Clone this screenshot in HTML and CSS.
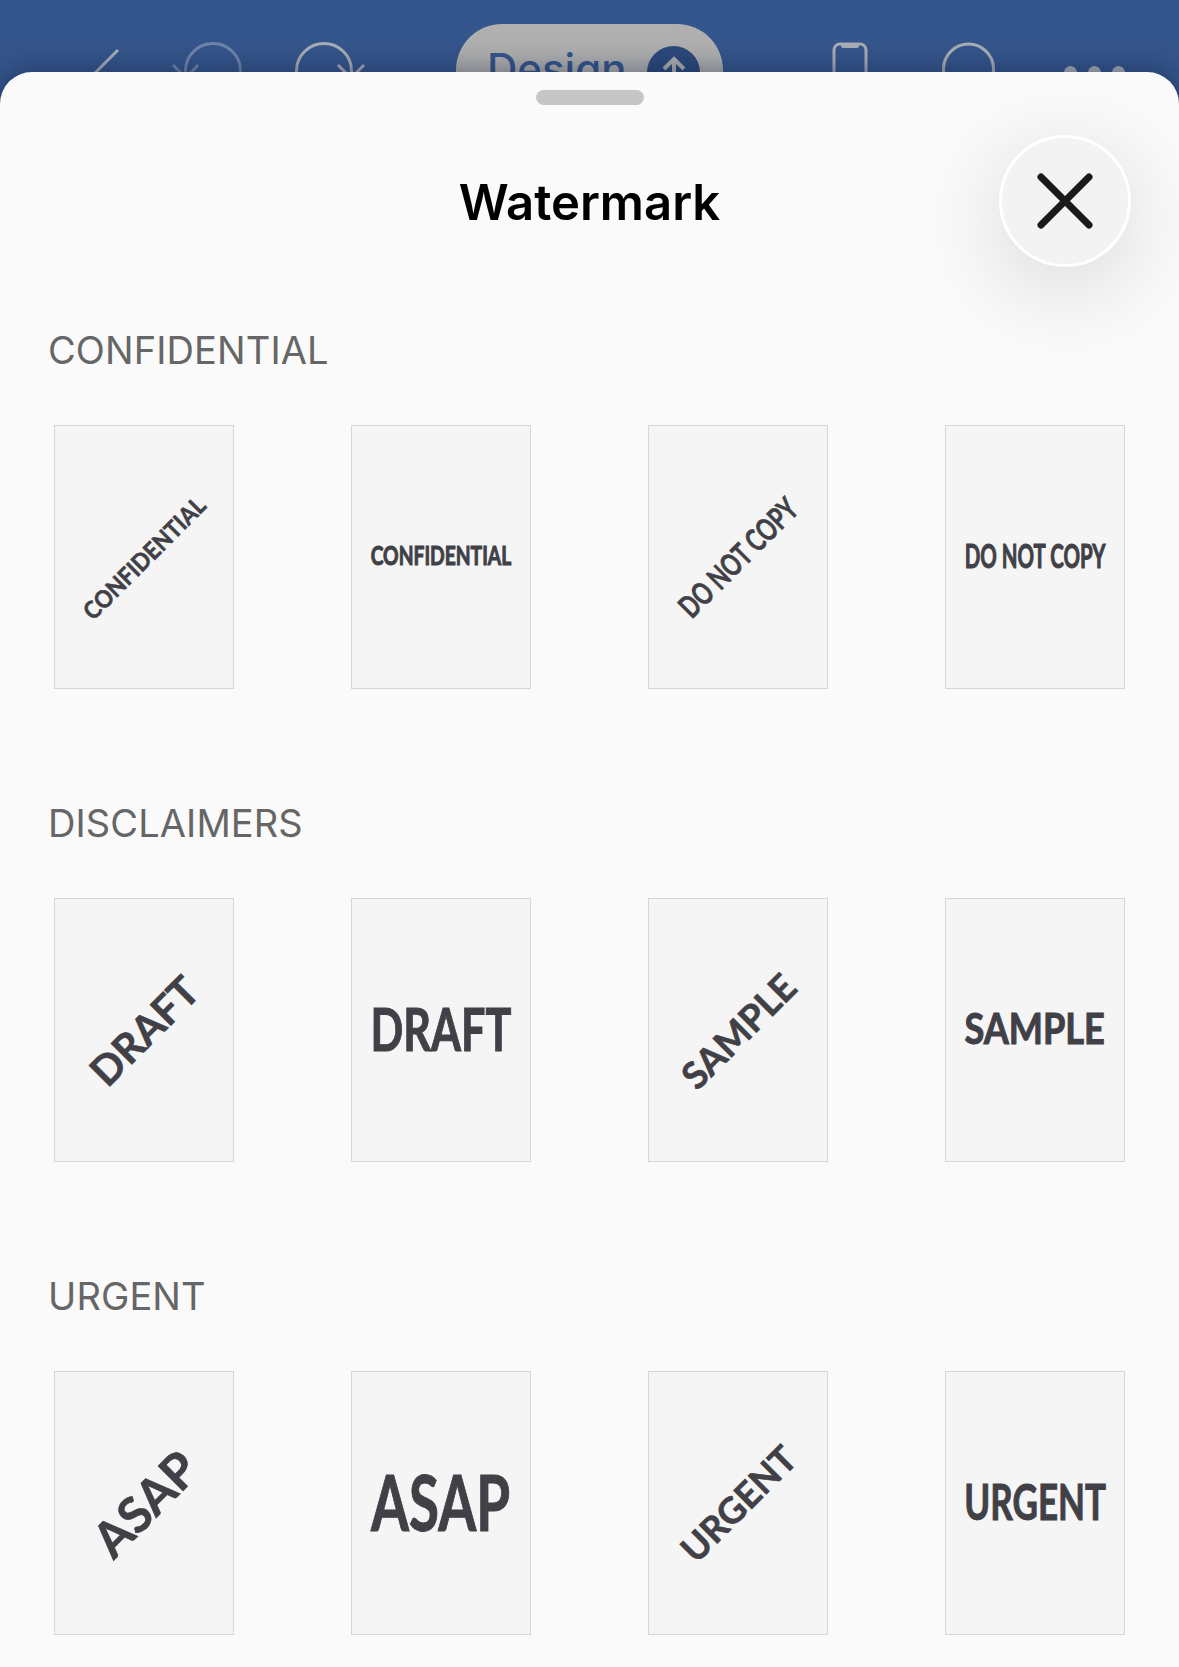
FILE: index.html
```html
<!DOCTYPE html>
<html lang="en">
<head>
    <meta charset="UTF-8">
    <meta name="viewport" content="width=device-width, initial-scale=1.0">
    <title>Watermark</title>
    <link rel="stylesheet" href="styles.css">
</head>
<body>
    <div class="toolbar">
        <svg class="tool tool-back" width="30" height="40" viewBox="0 0 30 40"><path d="M26 8 L-4 38"/></svg>
        <svg class="tool tool-undo" width="70" height="40" viewBox="0 0 70 40"><circle cx="41" cy="29" r="27.5"/><path d="M1 23 L14 36 L26 23"/></svg>
        <svg class="tool tool-redo" width="76" height="40" viewBox="0 0 76 40"><circle cx="34" cy="29" r="27.5"/><path d="M48 23 L61 36 L74 23"/></svg>
        <div class="pill">
            <span class="pill-label">Design</span>
            <span class="pill-arrow">
                <svg width="24" height="30" viewBox="0 0 24 30"><path d="M12 30 V3 M2 13 L12 3 L22 13"/></svg>
            </span>
        </div>
        <svg class="tool tool-phone" width="36" height="40" viewBox="0 0 36 40"><rect x="2" y="2" width="32" height="60" rx="6"/><path class="notch" d="M9 2 H27 V4 Q27 6 25 6 H11 Q9 6 9 4 Z"/></svg>
        <svg class="tool tool-search" width="53" height="40" viewBox="0 0 53 40"><circle cx="26.5" cy="27" r="25"/></svg>
        <div class="dots"><span></span><span></span><span></span></div>
    </div>

    <div class="sheet">
        <div class="handle"></div>
        <div class="sheet-head">
            <h1 class="sheet-title">Watermark</h1>
            <button class="close">
                <svg width="56" height="56" viewBox="0 0 56 56"><path d="M4 4 L52 52 M52 4 L4 52"/></svg>
            </button>
        </div>

        <h2 class="group-title">CONFIDENTIAL</h2>
        <div class="grid">
            <div class="page"><span class="mark conf-tilt">CONFIDENTIAL</span></div>
            <div class="page"><span class="mark flat conf">CONFIDENTIAL</span></div>
            <div class="page"><span class="mark copy-tilt">DO NOT COPY</span></div>
            <div class="page"><span class="mark flat copy">DO NOT COPY</span></div>
        </div>

        <h2 class="group-title">DISCLAIMERS</h2>
        <div class="grid">
            <div class="page"><span class="mark draft-tilt">DRAFT</span></div>
            <div class="page"><span class="mark flat draft">DRAFT</span></div>
            <div class="page"><span class="mark sample-tilt">SAMPLE</span></div>
            <div class="page"><span class="mark flat sample">SAMPLE</span></div>
        </div>

        <h2 class="group-title">URGENT</h2>
        <div class="grid">
            <div class="page"><span class="mark asap-tilt">ASAP</span></div>
            <div class="page"><span class="mark flat asap">ASAP</span></div>
            <div class="page"><span class="mark urgent-tilt">URGENT</span></div>
            <div class="page"><span class="mark flat urgent">URGENT</span></div>
        </div>
    </div>
</body>
</html>
```

FILE: styles.css
```css
* {
    box-sizing: border-box;
}

body {
    margin: 0;
    height: 1667px;
    overflow: hidden;
    background-color: #35568c;
    font-family: Inter, "Liberation Sans", sans-serif;
}

/* dimmed app bar behind the sheet */
.toolbar {
    height: 72px;
    overflow: hidden;
    display: flex;
    align-items: flex-start;
    padding: 42px 0 0 92px;
}

.tool {
    flex: none;
    overflow: visible;
}

.tool path, .tool rect, .tool circle {
    fill: none;
    stroke: #a9aeb6;
    stroke-width: 3;
}

.tool .notch {
    fill: #a9aeb6;
    stroke: none;
}

.tool-undo {
    margin-left: 50px;
}

.tool-undo path, .tool-undo circle {
    stroke: #6f86ab;
}

.tool-redo {
    margin-left: 48px;
}

.pill {
    flex: none;
    width: 267px;
    height: 100px;
    margin-top: -18px;
    margin-left: 90px;
    padding: 23px 23px 0 31px;
    border-radius: 46px;
    background-color: #b0b0b0;
    display: flex;
    justify-content: space-between;
}

.pill-label {
    color: #35568c;
    font-size: 42px;
    font-weight: 500;
    line-height: 44px;
}

.pill-arrow {
    width: 53px;
    height: 53px;
    margin-top: -1px;
    border-radius: 50%;
    background-color: #2c4a7d;
    display: flex;
    justify-content: center;
    padding-top: 10px;
}

.pill-arrow path {
    fill: none;
    stroke: #b0b0b0;
    stroke-width: 4;
}

.tool-phone {
    margin-left: 109px;
}

.tool-search {
    margin-left: 74px;
}

.dots {
    display: flex;
    gap: 11px;
    margin-left: 69px;
    margin-top: 24px;
}

.dots span {
    width: 13px;
    height: 13px;
    border-radius: 50%;
    background-color: #a9aeb6;
}

/* sheet */
.sheet {
    position: relative;
    height: 1595px;
    padding: 18px 48px 0;
    border-radius: 32px 32px 0 0;
    background-color: #fafafa;
    box-shadow: 0 0 30px rgba(10, 20, 50, .5);
}

.handle {
    width: 108px;
    height: 15px;
    margin: 0 auto;
    border-radius: 8px;
    background-color: #c6c6c6;
}

.sheet-head {
    position: relative;
    height: 132px;
    margin-top: 31px;
    display: flex;
    align-items: center;
    justify-content: center;
}

.sheet-title {
    margin: 0;
    font-size: 49px;
    font-weight: 600;
    color: #000;
}

.close {
    position: absolute;
    right: 0;
    top: -1px;
    width: 132px;
    height: 132px;
    padding: 0;
    border: 3px solid #fff;
    border-radius: 50%;
    background-color: #f3f3f3;
    box-shadow: 0 20px 90px rgba(0, 0, 0, .14);
    display: flex;
    align-items: center;
    justify-content: center;
}

.close path {
    fill: none;
    stroke: #1a1a1a;
    stroke-width: 7;
    stroke-linecap: round;
}

.group-title {
    margin: 0;
    padding-top: 59px;
    font-size: 38px;
    font-weight: 400;
    line-height: 46px;
    letter-spacing: .1px;
    color: #666;
}

.grid {
    display: grid;
    grid-template-columns: repeat(4, 180px);
    justify-content: space-between;
    margin: 52px 6px 52px;
}

.page {
    height: 264px;
    border: 1px solid #d6d6d6;
    background-color: #f5f5f5;
    display: flex;
    align-items: center;
    justify-content: center;
    overflow: hidden;
}

/* the preview images are squeezed, so most marks get a scaleX */
.mark {
    font-family: Lato, "Open Sans", sans-serif;
    font-weight: 700;
    color: #404046;
    white-space: nowrap;
    -webkit-text-stroke: .6px #404046;
}

.flat {
    margin-bottom: 4px;
    -webkit-text-stroke-width: 1px;
}

.conf {
    font-size: 26px;
    transform: scaleX(.74);
}

.conf-tilt {
    font-size: 24px;
    transform: rotate(-45deg) scaleX(.92);
}

.copy {
    font-size: 32px;
    transform: scaleX(.64);
}

.copy-tilt {
    font-size: 31px;
    transform: rotate(-45deg) scaleX(.72);
}

.draft {
    font-size: 60px;
    transform: scaleX(.72);
}

.draft-tilt {
    font-size: 41px;
    transform: rotate(-45deg);
}

.sample {
    font-size: 42px;
    transform: scaleX(.86);
}

.sample-tilt {
    font-size: 37px;
    transform: rotate(-45deg);
}

.asap {
    font-size: 76px;
    transform: scaleX(.72);
}

.asap-tilt {
    font-size: 49px;
    transform: rotate(-45deg);
}

.urgent {
    font-size: 50px;
    transform: scaleX(.7);
}

.urgent-tilt {
    font-size: 36px;
    transform: rotate(-45deg);
}
```
